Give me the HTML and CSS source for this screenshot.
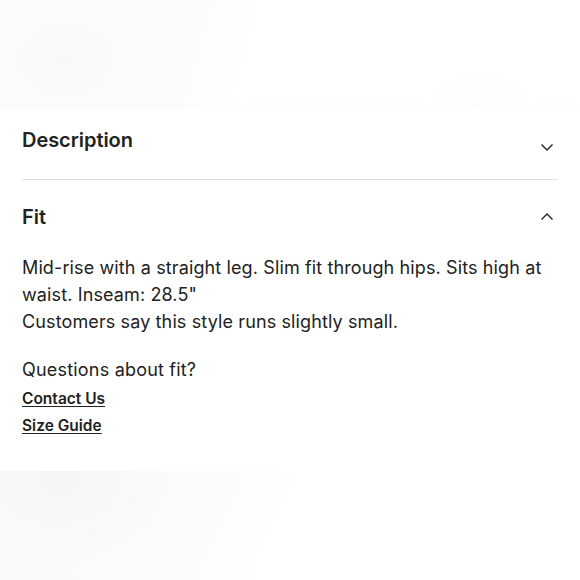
FILE: index.html
```html
<!DOCTYPE html>
<html lang="en">
<head>
<meta charset="utf-8">
<link rel="stylesheet" href="styles.css">
</head>
<body>
<div class="page">
  <div class="ghost ghost-top"></div>
  <section class="accordion">
    <div class="item">
      <button class="head">
        <span class="title">Description</span>
        <svg class="chev" width="14" height="14" viewBox="0 0 14 14"><path d="M1.5 4.5 L7 10 L12.5 4.5" fill="none" stroke="#222" stroke-width="1.4"/></svg>
      </button>
    </div>
    <div class="item open">
      <button class="head">
        <span class="title">Fit</span>
        <svg class="chev" width="14" height="14" viewBox="0 0 14 14"><path d="M1.5 9.5 L7 4 L12.5 9.5" fill="none" stroke="#222" stroke-width="1.4"/></svg>
      </button>
      <div class="body">
        <p class="copy">Mid-rise with a straight leg. Slim fit through hips. Sits high at waist. Inseam: 28.5"<br>Customers say this style runs slightly small.</p>
        <p class="q">Questions about fit?</p>
        <a class="link" href="#">Contact Us</a>
        <a class="link" href="#">Size Guide</a>
      </div>
    </div>
  </section>
  <div class="ghost ghost-bottom"></div>
</div>
</body>
</html>
```
FILE: styles.css
```css
* { box-sizing: border-box; }
html, body { margin: 0; padding: 0; background: #fff; }
body { font-family: Inter, "Noto Sans", sans-serif; color: #222; }
.page { width: 580px; height: 580px; overflow: hidden; display: flex; flex-direction: column; }
.ghost { flex: none; }
.ghost-top {
  height: 110px;
  background:
    radial-gradient(ellipse 70px 55px at 65px 60px, #f8f8f8 0%, #fafafa 55%, rgba(252,252,252,0) 100%),
    radial-gradient(ellipse 60px 30px at 480px 95px, #fcfcfc 0%, rgba(255,255,255,0) 100%),
    linear-gradient(105deg, #fcfcfc 0%, #fcfcfc 35%, rgba(255,255,255,0) 45%),
    linear-gradient(180deg, #fff 0%, #fff 90%, #fdfdfd 100%);
}
.accordion { padding: 0 22px; flex: none; }
.item { display: flex; flex-direction: column; }
.item:first-child { border-bottom: 1px solid #e2e2e2; }
.head {
  display: flex; align-items: center; justify-content: space-between;
  background: none; border: 0; padding: 0; margin: 0;
  font: inherit; color: inherit; text-align: left;
}
.item:first-child .head { height: 69px; padding-bottom: 9px; }
.item:first-child .chev { margin-top: 14px; }
.item.open .head { height: 74px; }
.title { font-size: 20px; font-weight: 600; color: #222; letter-spacing: -0.05px; }
.chev { margin-right: 4px; }
.body { display: flex; flex-direction: column; padding-bottom: 32px; }
.copy { margin: 0; font-size: 18px; line-height: 27px; color: #222; letter-spacing: 0.12px; }
.q { margin: 21px 0 0; font-size: 18px; line-height: 27px; letter-spacing: 0.2px; }
.link { font-size: 15.5px; font-weight: 600; color: #222; text-decoration: underline; text-underline-offset: 2px; line-height: 27px; align-self: flex-start; }
.link:first-of-type { margin-top: 2px; }
.ghost-bottom {
  flex: 1;
  background:
    radial-gradient(ellipse 110px 80px at 60px 10px, #f5f5f5 0%, #f8f8f8 50%, rgba(251,251,251,0) 100%),
    linear-gradient(115deg, #fafafa 0%, #fbfbfb 35%, rgba(255,255,255,0) 50%);
}
```
